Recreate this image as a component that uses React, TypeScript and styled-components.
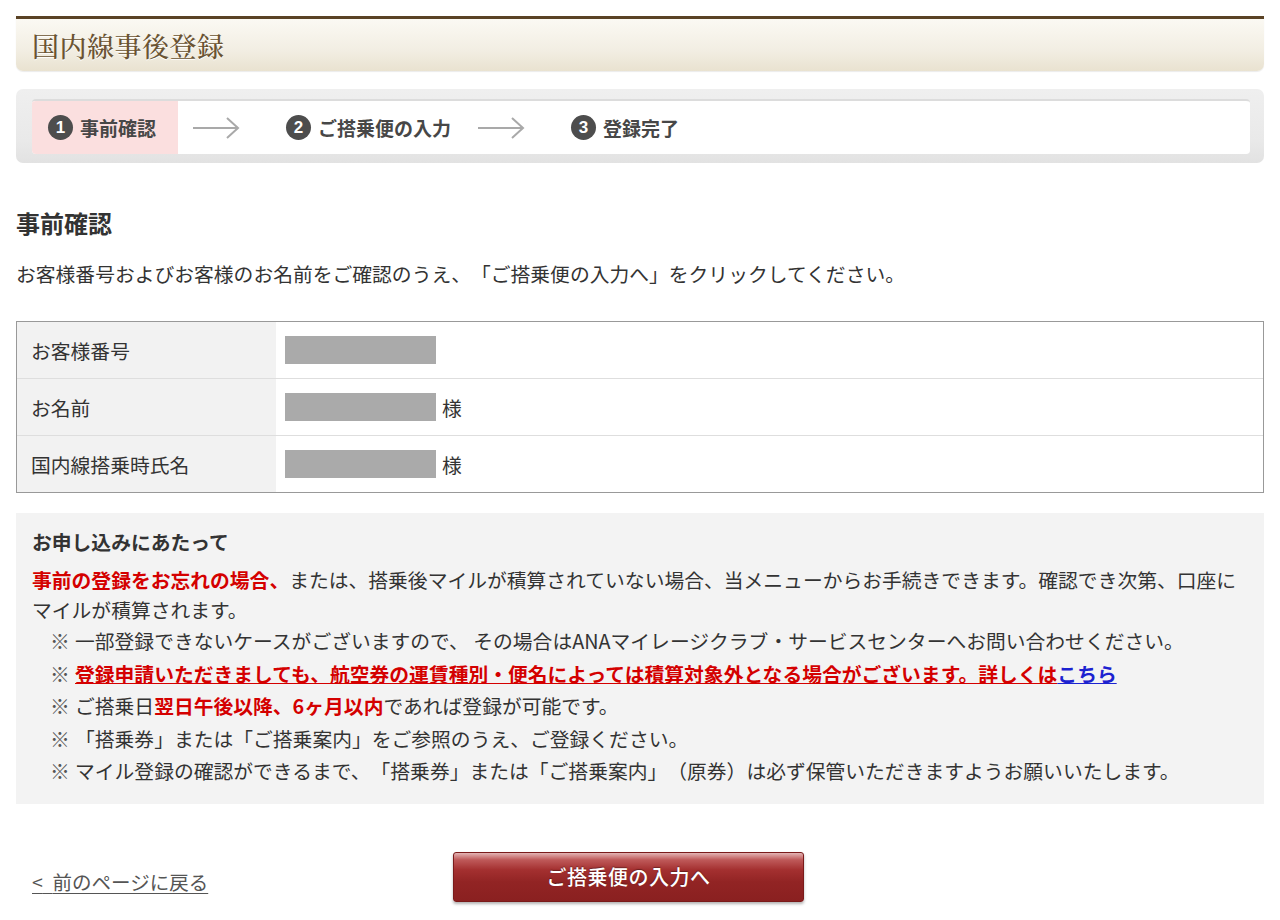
import React from "react";
import styled, { createGlobalStyle } from "styled-components";

const GlobalStyle = createGlobalStyle`
    html, body {
        margin: 0;
        padding: 0;
        background: #fff;
    }
    body {
        font-family: "Noto Sans CJK JP", "Noto Sans", sans-serif;
        color: #333;
        font-size: 19.8px;
        text-spacing-trim: space-all;
    }
`;

const Page = styled.div`
    padding: 16px 16px 0;
    width: 1248px;
`;

const PageHeader = styled.div`
    height: 52px;
    border-top: 3px solid #5a4225;
    border-radius: 0 0 7px 7px;
    background: linear-gradient(#fbf9f3, #f2eee3 60%, #e9e2d0);
    box-shadow: 0 1px 1px rgba(0, 0, 0, 0.08);
    display: flex;
    align-items: center;
    padding-left: 16px;
`;

const PageTitle = styled.h1`
    margin: 0;
    font-family: "Noto Serif CJK JP", "Noto Sans CJK JP", serif;
    font-weight: 500;
    font-size: 27px;
    color: #6a5332;
    letter-spacing: 0.5px;
    text-shadow: 0 1px 0 #fff;
`;

const StepsOuter = styled.div`
    margin-top: 18px;
    height: 74px;
    box-sizing: border-box;
    padding: 10px 14px 9px 16px;
    background: linear-gradient(#efefef, #e9e9e9 70%, #e2e2e2);
    border-radius: 7px;
`;

const StepsInner = styled.div`
    height: 100%;
    background: #fff;
    border-radius: 4px;
    border-top: 2px solid #dcdcdc;
    box-sizing: border-box;
    display: flex;
    align-items: stretch;
    overflow: hidden;
`;

const Step = styled.div<{ $active?: boolean }>`
    display: flex;
    align-items: center;
    gap: 7px;
    padding: ${(p) => (p.$active ? "0 22px 0 16px" : "0 12px 0 16px")};
    background: ${(p) => (p.$active ? "#fbdfdf" : "transparent")};
    font-size: 19px;
    font-weight: 700;
    color: #474747;
`;

const StepNum = styled.span`
    width: 25px;
    height: 25px;
    border-radius: 50%;
    background: #4d4d4d;
    color: #fff;
    font-family: "Liberation Sans", Arial, sans-serif;
    font-weight: 700;
    font-size: 17px;
    display: flex;
    align-items: center;
    justify-content: center;
`;

const ArrowBox = styled.div`
    display: flex;
    align-items: center;
    margin: 0 30px 0 14px;
`;

const SectionTitle = styled.h2`
    margin: 43px 0 0;
    font-size: 24px;
    line-height: 34px;
    font-weight: 700;
    color: #333;
`;

const Lead = styled.p`
    margin: 19px 0 0;
    line-height: 30px;
`;

const InfoTable = styled.div`
    margin-top: 32px;
    border: 1px solid #999;
`;

const InfoRow = styled.div`
    display: flex;
    height: 56px;
    & + & {
        border-top: 1px solid #dedede;
    }
`;

const InfoLabel = styled.div`
    box-sizing: border-box;
    width: 259px;
    background: #f2f2f2;
    padding-left: 14px;
    display: flex;
    align-items: center;
`;

const InfoValue = styled.div`
    flex: 1;
    padding-left: 9px;
    display: flex;
    align-items: center;
    gap: 6px;
`;

const Masked = styled.span`
    display: inline-block;
    width: 151px;
    height: 28px;
    background: #aaa;
`;

const Notice = styled.div`
    margin-top: 20px;
    background: #f3f3f3;
    padding: 14px 16px 16px;
`;

const NoticeTitle = styled.h3`
    margin: 0;
    font-size: 19.8px;
    line-height: 30px;
    font-weight: 700;
    color: #333;
`;

const NoticeText = styled.p`
    margin: 8px 0 0;
    line-height: 30px;
`;

const Strong = styled.strong`
    color: #d40000;
    font-weight: 700;
`;

const NoteList = styled.ul`
    list-style: none;
    margin: 0;
    padding: 0 0 0 18px;
`;

const Note = styled.li`
    display: flex;
    line-height: 32.5px;
`;

const NoteMark = styled.span`
    flex: 0 0 25px;
    color: #555;
`;

const RedLine = styled.span`
    color: #d40000;
    font-weight: 700;
    text-decoration: underline;
`;

const BlueLink = styled.a`
    color: #1c22d0;
    text-decoration: underline;
`;

const Footer = styled.div`
    margin-top: 48px;
    display: flex;
    align-items: center;
    padding-left: 16px;
    padding-bottom: 20px;
`;

const BackLink = styled.a`
    width: 421px;
    padding-top: 10px;
    font-size: 19.5px;
    color: #555;
    text-decoration: underline;
    text-underline-offset: 3px;
`;

const NextButton = styled.button`
    width: 351px;
    height: 50px;
    border: 1px solid #7a1a1a;
    border-radius: 3px;
    background: linear-gradient(#e3b4b4 0%, #bf5a5a 14%, #a43030 35%, #922424 60%, #8a2020 100%);
    box-shadow: 0 2px 3px rgba(0, 0, 0, 0.3);
    color: #fff;
    font-family: "Noto Sans CJK JP", sans-serif;
    font-size: 20px;
    font-weight: 500;
    letter-spacing: 0.5px;
    text-shadow: 0 -1px 1px rgba(0, 0, 0, 0.35);
`;

const Arrow = () => (
    <ArrowBox>
        <svg width="48" height="24" viewBox="0 0 48 24">
            <path d="M1 12 H46 M35 2 L46 12 L35 22" fill="none" stroke="#a9a9a9" strokeWidth="2" />
        </svg>
    </ArrowBox>
);

const rows = [
    { label: "お客様番号", suffix: false },
    { label: "お名前", suffix: true },
    { label: "国内線搭乗時氏名", suffix: true },
];

export default function App() {
    return (
        <>
            <GlobalStyle />
            <Page>
                <PageHeader>
                    <PageTitle>国内線事後登録</PageTitle>
                </PageHeader>

                <StepsOuter>
                    <StepsInner>
                        <Step $active>
                            <StepNum>1</StepNum>事前確認
                        </Step>
                        <Arrow />
                        <Step>
                            <StepNum>2</StepNum>ご搭乗便の入力
                        </Step>
                        <Arrow />
                        <Step>
                            <StepNum>3</StepNum>登録完了
                        </Step>
                    </StepsInner>
                </StepsOuter>

                <SectionTitle>事前確認</SectionTitle>
                <Lead>お客様番号およびお客様のお名前をご確認のうえ、「ご搭乗便の入力へ」をクリックしてください。</Lead>

                <InfoTable>
                    {rows.map((r) => (
                        <InfoRow key={r.label}>
                            <InfoLabel>{r.label}</InfoLabel>
                            <InfoValue>
                                <Masked />
                                {r.suffix && "様"}
                            </InfoValue>
                        </InfoRow>
                    ))}
                </InfoTable>

                <Notice>
                    <NoticeTitle>お申し込みにあたって</NoticeTitle>
                    <NoticeText>
                        <Strong>事前の登録をお忘れの場合、</Strong>
                        または、搭乗後マイルが積算されていない場合、当メニューからお手続きできます。確認でき次第、口座にマイルが積算されます。
                    </NoticeText>
                    <NoteList>
                        <Note>
                            <NoteMark>※</NoteMark>
                            <span>一部登録できないケースがございますので、 その場合はANAマイレージクラブ・サービスセンターへお問い合わせください。</span>
                        </Note>
                        <Note>
                            <NoteMark>※</NoteMark>
                            <span>
                                <RedLine>登録申請いただきましても、航空券の運賃種別・便名によっては積算対象外となる場合がございます。詳しくは</RedLine>
                                <BlueLink href="#">
                                    <b>こちら</b>
                                </BlueLink>
                            </span>
                        </Note>
                        <Note>
                            <NoteMark>※</NoteMark>
                            <span>
                                ご搭乗日<Strong>翌日午後以降、6ヶ月以内</Strong>であれば登録が可能です。
                            </span>
                        </Note>
                        <Note>
                            <NoteMark>※</NoteMark>
                            <span>「搭乗券」または「ご搭乗案内」をご参照のうえ、ご登録ください。</span>
                        </Note>
                        <Note>
                            <NoteMark>※</NoteMark>
                            <span>マイル登録の確認ができるまで、「搭乗券」または「ご搭乗案内」（原券）は必ず保管いただきますようお願いいたします。</span>
                        </Note>
                    </NoteList>
                </Notice>

                <Footer>
                    <BackLink href="#">&lt;{"\u2002"}前のページに戻る</BackLink>
                    <NextButton>ご搭乗便の入力へ</NextButton>
                </Footer>
            </Page>
        </>
    );
}
